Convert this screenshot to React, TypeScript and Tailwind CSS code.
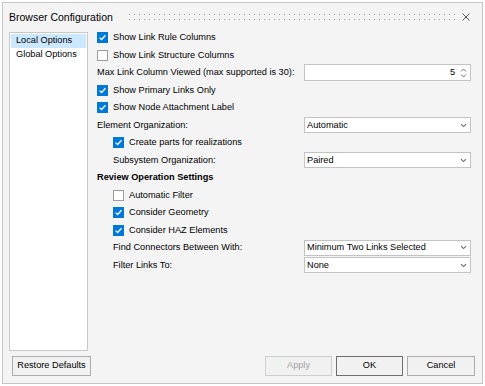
function Check({ checked }: { checked: boolean }) {
  if (checked) {
    return (
      <span className="flex h-[11px] w-[11px] shrink-0 items-center justify-center bg-[#0078d7]">
        <svg width="9" height="9" viewBox="0 0 9 9">
          <path d="M1.6 4.6 L3.6 6.5 L7.5 2.3" fill="none" stroke="#ffffff" strokeWidth="1.3" />
        </svg>
      </span>
    )
  }
  return <span className="h-[11px] w-[11px] shrink-0 border border-[#9c9c9c] bg-white" />
}

function CheckRow({ label, checked, indent }: { label: string; checked: boolean; indent?: boolean }) {
  return (
    <div className={`flex h-[17.5px] items-center ${indent ? "pl-[16px]" : ""}`}>
      <Check checked={checked} />
      <span className="ml-[5px] whitespace-nowrap">{label}</span>
    </div>
  )
}

function Chevron() {
  return (
    <svg width="7" height="5" viewBox="0 0 7 5" className="shrink-0">
      <path d="M1 1.2 L3.5 3.6 L6 1.2" fill="none" stroke="#6b6b6b" strokeWidth="1.1" />
    </svg>
  )
}

function SelectRow({ label, value, indent }: { label: string; value: string; indent?: boolean }) {
  return (
    <div className={`flex h-[17.5px] items-center ${indent ? "pl-[16px]" : ""}`}>
      <span className="flex-1 whitespace-nowrap">{label}</span>
      <div className="flex h-[16px] w-[167px] items-center justify-between border border-[#c3c3c3] bg-white pl-[2px] pr-[3px]">
        <span className="whitespace-nowrap">{value}</span>
        <Chevron />
      </div>
    </div>
  )
}

function Button({ label, disabled, primary, className }: { label: string; disabled?: boolean; primary?: boolean; className?: string }) {
  return (
    <div
      className={`flex h-[20px] items-center justify-center border bg-[#f1f1f1] ${
        primary ? "border-[#6f6f6f]" : disabled ? "border-[#cfcfcf]" : "border-[#adadad]"
      } ${disabled ? "text-[#a3a3a3]" : "text-black"} ${className ?? ""}`}
    >
      {label}
    </div>
  )
}

export default function App() {
  return (
    <div className="h-[386px] w-[485px] bg-white p-[2px] text-[9.2px] leading-none text-black [font-family:'Liberation_Sans',Arial,sans-serif]">
      <div className="flex h-[382px] w-[481px] flex-col border border-[#c6c6c6] bg-[#f4f4f4]">
        {/* title bar */}
        <div className="flex h-[26px] items-center pl-[6px] pr-[12px] pt-[2px]">
          <span className="whitespace-nowrap text-[10.5px]">Browser Configuration</span>
          <svg className="ml-[15px] mr-[6px] h-[8px] flex-1" preserveAspectRatio="none">
            <defs>
              <pattern id="grip" width="5" height="5" patternUnits="userSpaceOnUse">
                <rect x="1" y="1" width="1" height="1" fill="#9a9a9a" />
              </pattern>
            </defs>
            <rect x="0" y="0" width="100%" height="8" fill="url(#grip)" />
          </svg>
          <svg width="8" height="8" viewBox="0 0 8 8">
            <path d="M0.5 0.5 L7.5 7.5 M7.5 0.5 L0.5 7.5" stroke="#555555" strokeWidth="1" />
          </svg>
        </div>

        {/* main */}
        <div className="flex h-[322px]">
          <div className="ml-[6px] mt-[3px] h-[319px] w-[79px] border border-[#c8c8c8] bg-white p-[1px]">
            <div className="flex h-[14px] items-center bg-[#cce8ff] pl-[5px]">Local Options</div>
            <div className="flex h-[14px] items-center pl-[5px]">Global Options</div>
          </div>

          <div className="flex flex-1 flex-col pl-[9px] pr-[11px]">
            <CheckRow label="Show Link Rule Columns" checked />
            <CheckRow label="Show Link Structure Columns" checked={false} />
            <div className="flex h-[17.5px] items-center">
              <span className="flex-1 whitespace-nowrap">Max Link Column Viewed (max supported is 30):</span>
              <div className="flex h-[17px] w-[167px] items-center justify-end border border-[#c3c3c3] bg-white pr-[3px]">
                <span>5</span>
                <svg width="7" height="12" viewBox="0 0 7 12" className="ml-[5px]">
                  <path d="M1 4.5 L3.5 2 L6 4.5 M1 7.5 L3.5 10 L6 7.5" fill="none" stroke="#727272" strokeWidth="1" />
                </svg>
              </div>
            </div>
            <CheckRow label="Show Primary Links Only" checked />
            <CheckRow label="Show Node Attachment Label" checked />
            <SelectRow label="Element Organization:" value="Automatic" />
            <CheckRow label="Create parts for realizations" checked indent />
            <SelectRow label="Subsystem Organization:" value="Paired" indent />
            <div className="flex h-[17.5px] items-center font-bold">Review Operation Settings</div>
            <CheckRow label="Automatic Filter" checked={false} indent />
            <CheckRow label="Consider Geometry" checked indent />
            <CheckRow label="Consider HAZ Elements" checked indent />
            <SelectRow label="Find Connectors Between With:" value="Minimum Two Links Selected" indent />
            <SelectRow label="Filter Links To:" value="None" indent />
          </div>
        </div>

        {/* footer */}
        <div className="mt-[5px] flex items-center justify-between pl-[9px] pr-[7px]">
          <Button label="Restore Defaults" className="w-[79px] bg-[#ececec]" />
          <div className="flex gap-[4px]">
            <Button label="Apply" disabled className="w-[67px]" />
            <Button label="OK" primary className="w-[67px]" />
            <Button label="Cancel" className="w-[68px]" />
          </div>
        </div>
      </div>
    </div>
  )
}
